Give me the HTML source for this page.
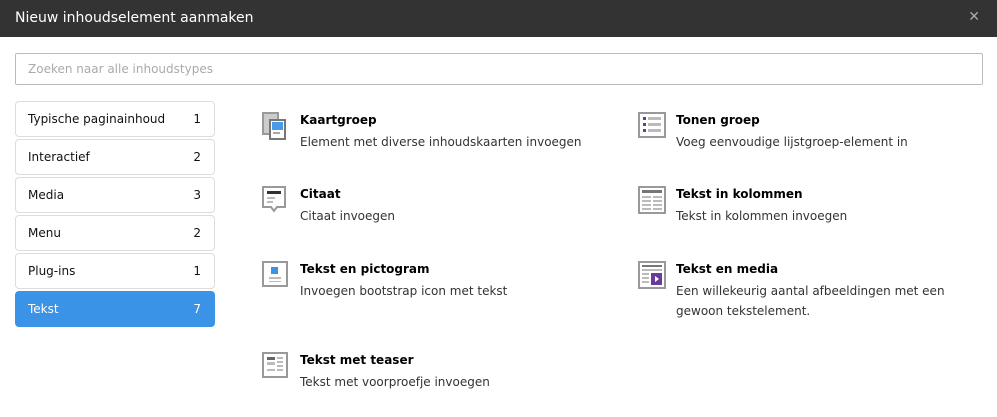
<!DOCTYPE html>
<html><head><meta charset="utf-8"><style>
*{box-sizing:border-box;margin:0;padding:0}
body{width:997px;height:417px;background:#fff;font-family:"DejaVu Sans",Verdana,sans-serif;color:#333;position:relative;overflow:hidden}
.hdr{position:absolute;left:0;top:0;width:997px;height:37px;background:#333;color:#fff;font-size:14px;padding:10px 15px}
.x{position:absolute;right:17px;top:9px;color:#aaa;font-size:14px;font-weight:bold}
.search{position:absolute;left:15px;top:53px;width:968px;height:32px;border:1px solid #bbb;border-radius:2px;font-size:12px;color:#aaa;padding:8px 12px}
.side{position:absolute;left:15px;top:101px;width:200px}
.it{height:36px;margin-bottom:2px;border:1px solid #ddd;border-radius:4px;font-size:12px;color:#111;padding:10px 12px;position:relative}
.it span{position:absolute;right:13px;top:10px}
.it.a{background:#3a93e6;border-color:#3a93e6;color:#fff}
.el{position:absolute}
.el svg{position:absolute;left:0;top:0}
.el b{position:absolute;left:38px;top:1px;font-size:12px;color:#000;white-space:nowrap}
.el p{position:absolute;left:38px;top:20px;font-size:12px;color:#333;line-height:20px;width:300px}
</style></head><body>
<div class="hdr">Nieuw inhoudselement aanmaken<span class="x">✕</span></div>
<div class="search">Zoeken naar alle inhoudstypes</div>
<div class="side">
<div class="it">Typische paginainhoud<span>1</span></div>
<div class="it">Interactief<span>2</span></div>
<div class="it">Media<span>3</span></div>
<div class="it">Menu<span>2</span></div>
<div class="it">Plug-ins<span>1</span></div>
<div class="it a">Tekst<span>7</span></div>
</div>

<div class="el" style="left:262px;top:112px"><svg width="28" height="28"><rect x="1" y="1" width="15" height="21" fill="#ccc" stroke="#999" stroke-width="2"/><rect x="8" y="8" width="15" height="19" fill="#fff" stroke="#777" stroke-width="2"/><rect x="10" y="10" width="11" height="8" fill="#4a9ae8"/><rect x="11" y="20" width="7" height="2" fill="#aaa"/></svg><b>Kaartgroep</b><p style="width:340px">Element met diverse inhoudskaarten invoegen</p></div>
<div class="el" style="left:262px;top:186px"><svg width="28" height="30"><path d="M1 1H23V21H15L12 25L9 21H1Z" fill="#fff" stroke="#999" stroke-width="2"/><rect x="5" y="5" width="14" height="3" fill="#333"/><rect x="5" y="11" width="8" height="2" fill="#bbb"/><rect x="5" y="15" width="6" height="2" fill="#bbb"/></svg><b>Citaat</b><p>Citaat invoegen</p></div>
<div class="el" style="left:262px;top:261px"><svg width="28" height="28"><rect x="1" y="1" width="24" height="24" fill="#fff" stroke="#999" stroke-width="2"/><rect x="9" y="6" width="7" height="7" fill="#3a93e6"/><rect x="7" y="16" width="12" height="2" fill="#bbb"/><rect x="7" y="20" width="12" height="1" fill="#bbb"/></svg><b>Tekst en pictogram</b><p>Invoegen bootstrap icon met tekst</p></div>
<div class="el" style="left:262px;top:352px"><svg width="28" height="28"><rect x="1" y="1" width="24" height="24" fill="#fff" stroke="#999" stroke-width="2"/><rect x="5" y="5" width="8" height="3" fill="#666"/><rect x="5" y="10" width="8" height="3" fill="#bbb"/><rect x="15" y="5" width="6" height="2" fill="#bbb"/><rect x="15" y="9" width="6" height="2" fill="#bbb"/><rect x="15" y="13" width="6" height="2" fill="#bbb"/><rect x="15" y="17" width="6" height="2" fill="#bbb"/><rect x="5" y="17" width="8" height="2" fill="#bbb"/></svg><b>Tekst met teaser</b><p>Tekst met voorproefje invoegen</p></div>

<div class="el" style="left:638px;top:112px"><svg width="28" height="28"><rect x="1" y="1" width="26" height="24" fill="#fff" stroke="#999" stroke-width="2"/><rect x="5" y="5" width="3" height="3" fill="#6a3c9a"/><rect x="5" y="11" width="3" height="3" fill="#6a3c9a"/><rect x="5" y="17" width="3" height="3" fill="#6a3c9a"/><rect x="10" y="5" width="13" height="3" fill="#bbb"/><rect x="10" y="11" width="13" height="3" fill="#bbb"/><rect x="10" y="17" width="13" height="3" fill="#bbb"/></svg><b>Tonen groep</b><p>Voeg eenvoudige lijstgroep-element in</p></div>
<div class="el" style="left:638px;top:186px"><svg width="28" height="28"><rect x="1" y="1" width="26" height="26" fill="#fff" stroke="#999" stroke-width="2"/><rect x="4" y="4" width="20" height="3" fill="#777"/><rect x="4" y="10" width="9" height="2" fill="#bbb"/><rect x="15" y="10" width="9" height="2" fill="#bbb"/><rect x="4" y="14" width="9" height="2" fill="#bbb"/><rect x="15" y="14" width="9" height="2" fill="#bbb"/><rect x="4" y="18" width="9" height="2" fill="#bbb"/><rect x="15" y="18" width="9" height="2" fill="#bbb"/><rect x="4" y="22" width="9" height="2" fill="#bbb"/><rect x="15" y="22" width="9" height="2" fill="#bbb"/></svg><b>Tekst in kolommen</b><p>Tekst in kolommen invoegen</p></div>
<div class="el" style="left:638px;top:261px"><svg width="28" height="28"><rect x="1" y="1" width="26" height="26" fill="#fff" stroke="#999" stroke-width="2"/><rect x="4" y="4" width="20" height="2" fill="#777"/><rect x="4" y="8" width="20" height="2" fill="#bbb"/><rect x="4" y="12" width="7" height="2" fill="#bbb"/><rect x="4" y="16" width="7" height="2" fill="#bbb"/><rect x="4" y="20" width="7" height="2" fill="#bbb"/><rect x="13" y="12" width="11" height="12" fill="#6a3c9a"/><path d="M17 15L21 18L17 21Z" fill="#fff"/></svg><b>Tekst en media</b><p>Een willekeurig aantal afbeeldingen met een gewoon tekstelement.</p></div>
</body></html>
